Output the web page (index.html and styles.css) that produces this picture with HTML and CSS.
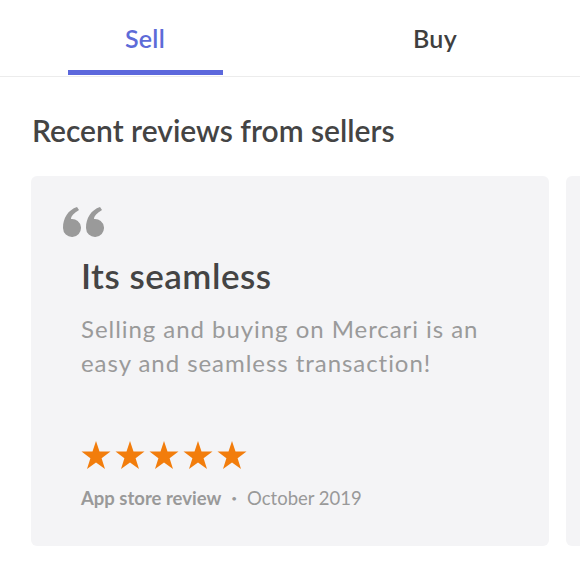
FILE: index.html
```html
<!DOCTYPE html>
<html>
<head>
<meta charset="utf-8">
<link rel="stylesheet" href="styles.css">
</head>
<body>
<div class="tabs">
  <div class="tab active"><span class="tab-label">Sell</span><span class="tab-bar"></span></div>
  <div class="tab"><span class="tab-label">Buy</span></div>
</div>
<h2 class="section-title">Recent reviews from sellers</h2>
<div class="carousel">
  <div class="card">
    <svg class="quote" viewBox="0 0 42 30" width="42" height="30">
      <path d="M1 21 C1 11 6 3 15 0 L17 3 C12 6 9 9 9 12 A9 9 0 1 1 1 21 Z" fill="#9a9a9a"/>
      <path transform="translate(23 0)" d="M1 21 C1 11 6 3 15 0 L17 3 C12 6 9 9 9 12 A9 9 0 1 1 1 21 Z" fill="#9a9a9a"/>
    </svg>
    <h3 class="card-title">Its seamless</h3>
    <p class="card-body">Selling and buying on Mercari is an easy and seamless transaction!</p>
    <div class="stars">
      <svg viewBox="0 0 30 28" width="30" height="28"><path d="M15 0 L18.5 10.6 L29.5 10.6 L20.6 17.2 L24 28 L15 21.4 L6 28 L9.4 17.2 L0.5 10.6 L11.5 10.6 Z" fill="#f27d0c"/></svg>
      <svg viewBox="0 0 30 28" width="30" height="28"><path d="M15 0 L18.5 10.6 L29.5 10.6 L20.6 17.2 L24 28 L15 21.4 L6 28 L9.4 17.2 L0.5 10.6 L11.5 10.6 Z" fill="#f27d0c"/></svg>
      <svg viewBox="0 0 30 28" width="30" height="28"><path d="M15 0 L18.5 10.6 L29.5 10.6 L20.6 17.2 L24 28 L15 21.4 L6 28 L9.4 17.2 L0.5 10.6 L11.5 10.6 Z" fill="#f27d0c"/></svg>
      <svg viewBox="0 0 30 28" width="30" height="28"><path d="M15 0 L18.5 10.6 L29.5 10.6 L20.6 17.2 L24 28 L15 21.4 L6 28 L9.4 17.2 L0.5 10.6 L11.5 10.6 Z" fill="#f27d0c"/></svg>
      <svg viewBox="0 0 30 28" width="30" height="28"><path d="M15 0 L18.5 10.6 L29.5 10.6 L20.6 17.2 L24 28 L15 21.4 L6 28 L9.4 17.2 L0.5 10.6 L11.5 10.6 Z" fill="#f27d0c"/></svg>
    </div>
    <div class="meta"><span class="source">App store review</span><span class="dot">•</span><span class="date">October 2019</span></div>
  </div>
  <div class="card"></div>
</div>
</body>
</html>
```
FILE: styles.css
```css
* { box-sizing: border-box; }
html, body { margin: 0; padding: 0; background: #fff; }
body {
  font-family: Lato, "Open Sans", sans-serif;
  color: #444;
  width: 580px;
  height: 580px;
  overflow: hidden;
}
.tabs {
  display: flex;
  height: 77px;
  border-bottom: 1px solid #ececec;
}
.tab {
  flex: 1;
  display: flex;
  flex-direction: column;
  align-items: center;
}
.tab-label {
  font-size: 25px;
  font-weight: 600;
  color: #3f3f3f;
  line-height: 28px;
  margin-top: 24px;
  letter-spacing: 0.3px;
}
.tab.active .tab-label { color: #5d6bd8; }
.tab-bar {
  margin-top: auto;
  width: 155px;
  height: 5px;
  background: #5c68dc;
  margin-bottom: 1px;
}
.section-title {
  margin: 35px 0 0 32px;
  font-size: 30px;
  font-weight: 600;
  color: #444;
  line-height: 36px;
}
.carousel {
  display: flex;
  gap: 17px;
  margin: 28px 0 0 0;
  padding-left: 31px;
  width: 580px;
  overflow: hidden;
}
.card {
  flex: 0 0 518px;
  height: 370px;
  background: #f4f4f6;
  border-radius: 6px;
  padding: 31px 30px 0 50px;
}
.quote { display: block; margin-left: -19px; }
.card-title {
  margin: 19px 0 0 0;
  font-size: 35px;
  font-weight: 600;
  color: #444;
  line-height: 38px;
  letter-spacing: 0.5px;
}
.card-body {
  margin: 18px 0 0 0;
  font-size: 24px;
  line-height: 34px;
  color: #9a9a9a;
  width: 420px;
  letter-spacing: 0.95px;
}
.stars {
  display: flex;
  gap: 4px;
  margin-top: 61px;
}
.stars svg { display: block; }
.meta {
  margin-top: 18px;
  font-size: 18.5px;
  color: #999;
  display: flex;
  align-items: center;
}
.source { font-weight: 700; color: #999; }
.dot { font-size: 10px; margin: 0 10px; }
.date { font-weight: 400; }
```
